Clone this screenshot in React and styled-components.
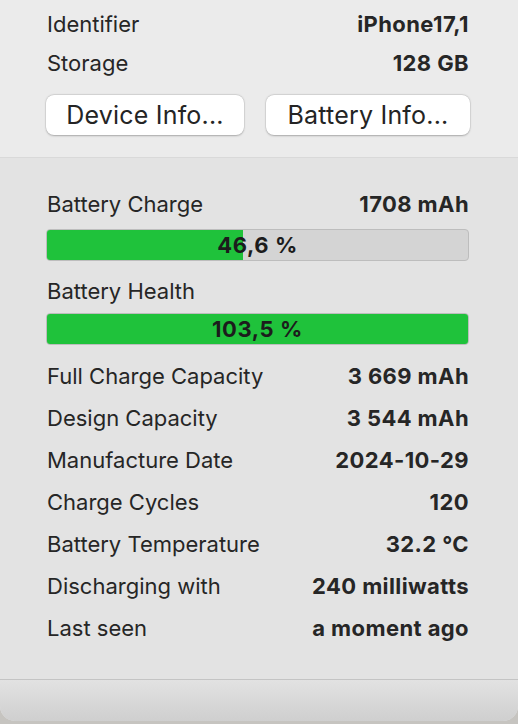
import styled, { createGlobalStyle } from 'styled-components';

const GlobalStyle = createGlobalStyle`
	html, body {
		margin: 0;
		padding: 0;
		background: #c6c4c0;
	}
	* {
		box-sizing: border-box;
	}
`;

const topRows = [
	{ label: 'Identifier', value: 'iPhone17,1' },
	{ label: 'Storage', value: '128 GB' },
];

const infoRows = [
	{ label: 'Full Charge Capacity', value: '3 669 mAh' },
	{ label: 'Design Capacity', value: '3 544 mAh' },
	{ label: 'Manufacture Date', value: '2024-10-29' },
	{ label: 'Charge Cycles', value: '120' },
	{ label: 'Battery Temperature', value: '32.2 °C' },
	{ label: 'Discharging with', value: '240 milliwatts' },
	{ label: 'Last seen', value: 'a moment ago' },
];

export default function App() {
	const charge = 46.6;
	const health = 103.5;

	return (
		<>
			<GlobalStyle />
			<Window>
				<TopSection>
					{topRows.map((row) => (
						<Row key={row.label} height={39}>
							<Label>{row.label}</Label>
							<Value>{row.value}</Value>
						</Row>
					))}
					<Buttons>
						<Button>Device Info...</Button>
						<Button>Battery Info...</Button>
					</Buttons>
				</TopSection>

				<BatterySection>
					<Row height={30}>
						<Label>Battery Charge</Label>
						<Value>1708 mAh</Value>
					</Row>
					<Bar gap={10}>
						<Fill style={{ width: Math.min(charge, 100) + '%' }} />
						<BarText>46,6 %</BarText>
					</Bar>
					<Row height={30} gap={15}>
						<Label>Battery Health</Label>
					</Row>
					<Bar gap={7}>
						<Fill style={{ width: Math.min(health, 100) + '%' }} />
						<BarText>103,5 %</BarText>
					</Bar>
					<Details>
						{infoRows.map((row) => (
							<Row key={row.label} height={42}>
								<Label>{row.label}</Label>
								<Value>{row.value}</Value>
							</Row>
						))}
					</Details>
				</BatterySection>

				<Footer />
			</Window>
		</>
	);
}

const Window = styled.div`
	width: 518px;
	height: 721px;
	display: flex;
	flex-direction: column;
	background: #e3e3e3;
	border-radius: 0 0 15px 15px;
	overflow: hidden;
	font-family: Inter, 'Liberation Sans', sans-serif;
	color: #262626;
`;

const TopSection = styled.div`
	padding: 4px 49px 22px 47px;
	background: #ebebeb;
	border-bottom: 1px solid #d9d9d9;
`;

const Row = styled.div`
	height: ${(p) => p.height}px;
	margin-top: ${(p) => p.gap || 0}px;
	display: flex;
	align-items: center;
	justify-content: space-between;
`;

const Label = styled.span`
	font-size: 22px;
`;

const Value = styled.span`
	font-size: 22px;
	font-weight: 700;
	letter-spacing: 0.4px;
`;

const Buttons = styled.div`
	margin-top: 13px;
	margin-left: -1px;
	margin-right: -1px;
	display: grid;
	grid-template-columns: 198px 204px;
	justify-content: space-between;
`;

const Button = styled.button`
	height: 40px;
	border: none;
	border-radius: 8px;
	background: #ffffff;
	box-shadow: 0 0.5px 2px rgba(0, 0, 0, 0.25), 0 0 0 0.5px rgba(0, 0, 0, 0.08);
	font-family: inherit;
	font-size: 25px;
	letter-spacing: 0.2px;
	color: #242424;
	padding: 0;
`;

const BatterySection = styled.div`
	flex: 1;
	padding: 31px 49px 0 47px;
	display: flex;
	flex-direction: column;
	border-bottom: 1px solid #c4c4c4;
`;

const Bar = styled.div`
	position: relative;
	height: 32px;
	margin-top: ${(p) => p.gap}px;
	margin-left: -1px;
	background: #d4d4d4;
	border: 1px solid #bdbdbd;
	border-radius: 4px;
	overflow: hidden;
	display: flex;
	align-items: center;
	justify-content: center;
`;

const Fill = styled.div`
	position: absolute;
	left: 0;
	top: 0;
	bottom: 0;
	background: #1fc23b;
`;

const BarText = styled.span`
	position: relative;
	font-size: 22px;
	font-weight: 700;
	letter-spacing: 0.6px;
	color: #1c1c1c;
`;

const Details = styled.div`
	margin-top: 10px;
	display: flex;
	flex-direction: column;
`;

const Footer = styled.div`
	height: 41px;
	background: linear-gradient(#e2e2e2, #cfcfcf);
`;
